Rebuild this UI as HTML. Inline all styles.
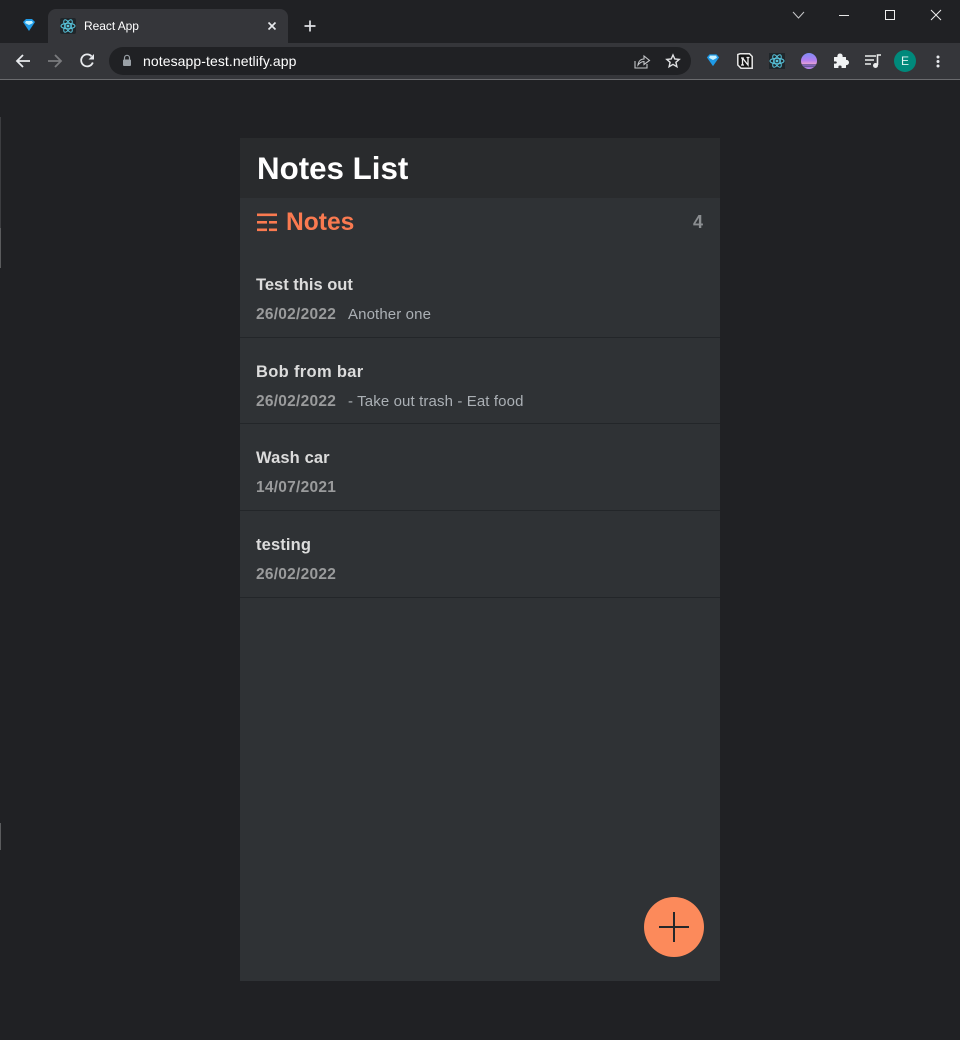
<!DOCTYPE html>
<html>
<head>
<meta charset="utf-8">
<title>React App</title>
<style>
html,body{margin:0;padding:0;background:#202124;}
body{width:960px;height:1040px;position:relative;overflow:hidden;font-family:"Liberation Sans",sans-serif;}
.a{position:absolute;white-space:nowrap;}
svg{position:absolute;overflow:visible;}
.title{left:256px;font-size:16.5px;font-weight:bold;color:#dcdcdc;line-height:20px;}
.date{left:256px;font-size:15.5px;font-weight:bold;color:#9a9b9c;line-height:18px;letter-spacing:.25px;}
.desc{font-size:15px;color:#abb0b5;line-height:18px;letter-spacing:.12px;}
.line{left:240px;width:480px;height:1px;background:#232629;}
</style>
</head>
<body>
<!-- browser chrome -->
<div class="a" style="left:0;top:43px;width:960px;height:36px;background:#35363a;"></div>
<div class="a" style="left:0;top:79px;width:960px;height:1px;background:#6a6b6e;"></div>
<div class="a" style="left:0;top:117px;width:1px;height:111px;background:#3c3d40;"></div>
<div class="a" style="left:0;top:228px;width:1px;height:40px;background:#5a5b5d;"></div>
<div class="a" style="left:0;top:823px;width:1px;height:27px;background:#5a5b5d;"></div>
<div class="a" style="left:48px;top:9px;width:240px;height:34px;background:#35363a;border-radius:8px 8px 0 0;"></div>
<div class="a" style="left:109px;top:47px;width:582px;height:28px;background:#202124;border-radius:14px;"></div>
<svg style="left:21px;top:17px" width="16" height="16" viewBox="0 0 16 16"><path d="M2 5 L5 2 H11 L14 5 L8 14Z" fill="#1f9be8"/><path d="M5 4 H11 L12 6 L8 8 L4 6Z" fill="#bdf0ff"/></svg>
<svg style="left:60px;top:18px" width="16" height="16" viewBox="0 0 16 16"><rect width="16" height="16" rx="2" fill="#20262a"/><g fill="none" stroke="#58c4dc" stroke-width="1"><ellipse cx="8" cy="8" rx="7" ry="2.8"/><ellipse cx="8" cy="8" rx="7" ry="2.8" transform="rotate(60 8 8)"/><ellipse cx="8" cy="8" rx="7" ry="2.8" transform="rotate(120 8 8)"/></g><circle cx="8" cy="8" r="1.4" fill="#58c4dc"/></svg>
<div class="a" style="left:84px;top:18px;font-size:12px;line-height:16px;color:#fff;letter-spacing:-.05px;">React App</div>
<svg style="left:267px;top:21px" width="10" height="10" viewBox="0 0 10 10"><path d="M1.5 1.5 L8.5 8.5 M8.5 1.5 L1.5 8.5" stroke="#e8eaed" stroke-width="1.6"/></svg>
<svg style="left:304px;top:20px" width="12" height="12" viewBox="0 0 12 12"><path d="M6 0.5 V11.5 M0.5 6 H11.5" stroke="#dfe1e5" stroke-width="1.7"/></svg>
<svg style="left:792px;top:11px" width="13" height="8" viewBox="0 0 13 8"><path d="M1 1 L6.5 7 L12 1" fill="none" stroke="#c8c9cb" stroke-width="1"/></svg>
<div class="a" style="left:839px;top:15px;width:10px;height:1px;background:#e8e8e8;"></div>
<div class="a" style="left:885px;top:10px;width:8px;height:8px;border:1px solid #eee;"></div>
<svg style="left:931px;top:10px" width="10" height="10" viewBox="0 0 10 10"><path d="M0 0 L10 10 M10 0 L0 10" stroke="#eee" stroke-width="1"/></svg>
<svg style="left:15px;top:53px" width="16" height="16" viewBox="0 0 16 16"><path d="M15 8 H2 M8 2 L2 8 L8 14" fill="none" stroke="#e8eaed" stroke-width="1.8"/></svg>
<svg style="left:47px;top:53px" width="16" height="16" viewBox="0 0 16 16"><path d="M1 8 H14 M8 2 L14 8 L8 14" fill="none" stroke="#7a7b7e" stroke-width="1.8"/></svg>
<svg style="left:80px;top:53px" width="15" height="15" viewBox="0 0 15 15"><path d="M12.8 9.5 A6 6 0 1 1 11.5 3.2" fill="none" stroke="#e8eaed" stroke-width="1.8"/><path d="M14 1 V6.5 H8.5Z" fill="#e8eaed"/></svg>
<svg style="left:122px;top:54px" width="10" height="13" viewBox="0 0 10 13"><path d="M2.5 5.5 V3.8 a2.5 2.5 0 0 1 5 0 V5.5" fill="none" stroke="#9aa0a6" stroke-width="1.2"/><rect x="1" y="5.5" width="8" height="6.5" rx="1" fill="#9aa0a6"/></svg>
<div class="a" style="left:143px;top:53px;font-size:14px;line-height:16px;color:#fff;letter-spacing:.08px;">notesapp-test.netlify.app</div>
<svg style="left:634px;top:54px" width="16" height="15" viewBox="0 0 16 15"><path d="M1 7 V14 H13 V10" fill="none" stroke="#c4c6c9" stroke-width="1.1"/><path d="M4 11 C4.5 7 7 5 10 5 V2 L15.5 6.5 L10 10.5 V7.5 C8 7.5 6 8.5 4 11Z" fill="none" stroke="#c4c6c9" stroke-width="1.1"/></svg>
<svg style="left:666px;top:54px" width="14" height="14" viewBox="0 0 14 14"><path d="M7 1 L8.8 5 L13.2 5.4 L9.9 8.3 L10.9 12.7 L7 10.4 L3.1 12.7 L4.1 8.3 L0.8 5.4 L5.2 5Z" fill="none" stroke="#e0e1e3" stroke-width="1.4"/></svg>
<svg style="left:706px;top:53px" width="14" height="14" viewBox="0 0 16 16"><path d="M1 5 L4 1.5 H12 L15 5 L8 15Z" fill="#1f9be8"/><path d="M4.5 3 H11.5 L12.5 5.5 L8 8 L3.5 5.5Z" fill="#c8f2ff"/></svg>
<svg style="left:737px;top:53px" width="16" height="16" viewBox="0 0 16 16"><path d="M3 0.8 H12.5 L15.2 3.5 V15.2 H4 L0.8 12 V1.5Z" fill="#151515" stroke="#e6e6e6" stroke-width="1.5" stroke-linejoin="miter"/><path d="M5.5 5 V12 M5.5 5 L11 12 V4.5 M4 5 H6.8 M4 12 H7 M9.5 4.5 H12.5" fill="none" stroke="#f0f0f0" stroke-width="1.3"/></svg>
<svg style="left:769px;top:53px" width="16" height="16" viewBox="0 0 16 16"><rect width="16" height="16" fill="#20262a"/><g fill="none" stroke="#58c4dc" stroke-width="1"><ellipse cx="8" cy="8" rx="7" ry="2.8"/><ellipse cx="8" cy="8" rx="7" ry="2.8" transform="rotate(60 8 8)"/><ellipse cx="8" cy="8" rx="7" ry="2.8" transform="rotate(120 8 8)"/></g><circle cx="8" cy="8" r="1.4" fill="#58c4dc"/></svg>
<div class="a" style="left:801px;top:53px;width:16px;height:16px;border-radius:50%;background:linear-gradient(#7f8cf5 0%,#b37ff0 45%,#e39fd8 68%,#5d4f8a 72%,#8b6cc4 80%,#5d4f8a 86%,#c08cf0 92%,#b37ff0 100%);"></div>
<svg style="left:833px;top:53px" width="16" height="16" viewBox="0 0 16 16"><path d="M1.5 4.5 H5 C4.4 2.2 5.4 1 7 1 C8.6 1 9.6 2.2 9 4.5 H12.5 V7.5 C14.6 7 15.5 8.2 15.5 9.5 C15.5 10.8 14.6 12 12.5 11.5 V14.5 H9 C9.4 12.8 8.6 12 7 12 C5.4 12 4.6 12.8 5 14.5 H1.5 V11 C3.5 11.4 4.3 10.5 4.3 9.5 C4.3 8.5 3.5 7.6 1.5 8Z" fill="#f1f3f4" stroke="#f1f3f4" stroke-width="1" stroke-linejoin="round"/></svg>
<svg style="left:865px;top:53px" width="16" height="16" viewBox="0 0 16 16"><path d="M0 3 H11 M0 7 H9 M0 11 H6" stroke="#eceded" stroke-width="1.5"/><path d="M12.5 12 V2 H16" fill="none" stroke="#eceded" stroke-width="1.6"/><circle cx="10.5" cy="12.5" r="2.5" fill="#eceded"/></svg>
<div class="a" style="left:894px;top:50px;width:22px;height:22px;border-radius:50%;background:#00897b;color:#dff3f0;font-size:12px;line-height:22px;text-align:center;">E</div>
<svg style="left:936px;top:55px" width="4" height="13" viewBox="0 0 4 13"><circle cx="2" cy="2" r="1.5" fill="#e8eaed"/><circle cx="2" cy="6.5" r="1.5" fill="#e8eaed"/><circle cx="2" cy="11" r="1.5" fill="#e8eaed"/></svg>

<!-- app -->
<div class="a" style="left:240px;top:138px;width:480px;height:843px;background:#2f3235;"></div>
<div class="a" style="left:240px;top:138px;width:480px;height:60px;background:#292b2d;"></div>
<div class="a" style="left:257px;top:151px;font-size:31.3px;font-weight:bold;line-height:36px;color:#fff;">Notes List</div>
<svg style="left:257px;top:213px" width="20" height="19" viewBox="0 0 20 19" fill="#fa7a50"><rect x="0" y="0.5" width="20" height="2.6"/><rect x="0" y="8" width="10" height="2.6"/><rect x="12" y="8" width="8" height="2.6"/><rect x="0" y="15.5" width="10" height="2.6"/><rect x="12" y="15.5" width="8" height="2.6"/></svg>
<div class="a" style="left:286px;top:208px;font-size:24.6px;font-weight:bold;line-height:29px;color:#fa7a50;">Notes</div>
<div class="a" style="left:693px;top:212px;font-size:18px;font-weight:bold;line-height:20px;color:#8b8e91;">4</div>

<div class="a title" style="top:275px;">Test this out</div>
<div class="a date" style="top:306px;">26/02/2022</div>
<div class="a desc" style="left:348px;top:306px;">Another one</div>
<div class="a line" style="top:337px;"></div>

<div class="a title" style="top:362px;letter-spacing:.33px;">Bob from bar</div>
<div class="a date" style="top:393px;">26/02/2022</div>
<div class="a desc" style="left:348px;top:393px;">- Take out trash - Eat food</div>
<div class="a line" style="top:423px;"></div>

<div class="a title" style="top:448px;letter-spacing:.12px;">Wash car</div>
<div class="a date" style="top:479px;">14/07/2021</div>
<div class="a line" style="top:510px;"></div>

<div class="a title" style="top:535px;letter-spacing:.14px;">testing</div>
<div class="a date" style="top:566px;">26/02/2022</div>
<div class="a line" style="top:597px;"></div>

<div class="a" style="left:644px;top:897px;width:60px;height:60px;border-radius:50%;background:#fc8a5b;"></div>
<div class="a" style="left:659px;top:926px;width:30px;height:2px;background:#25272a;"></div>
<div class="a" style="left:673px;top:912px;width:2px;height:30px;background:#25272a;"></div>
</body>
</html>
